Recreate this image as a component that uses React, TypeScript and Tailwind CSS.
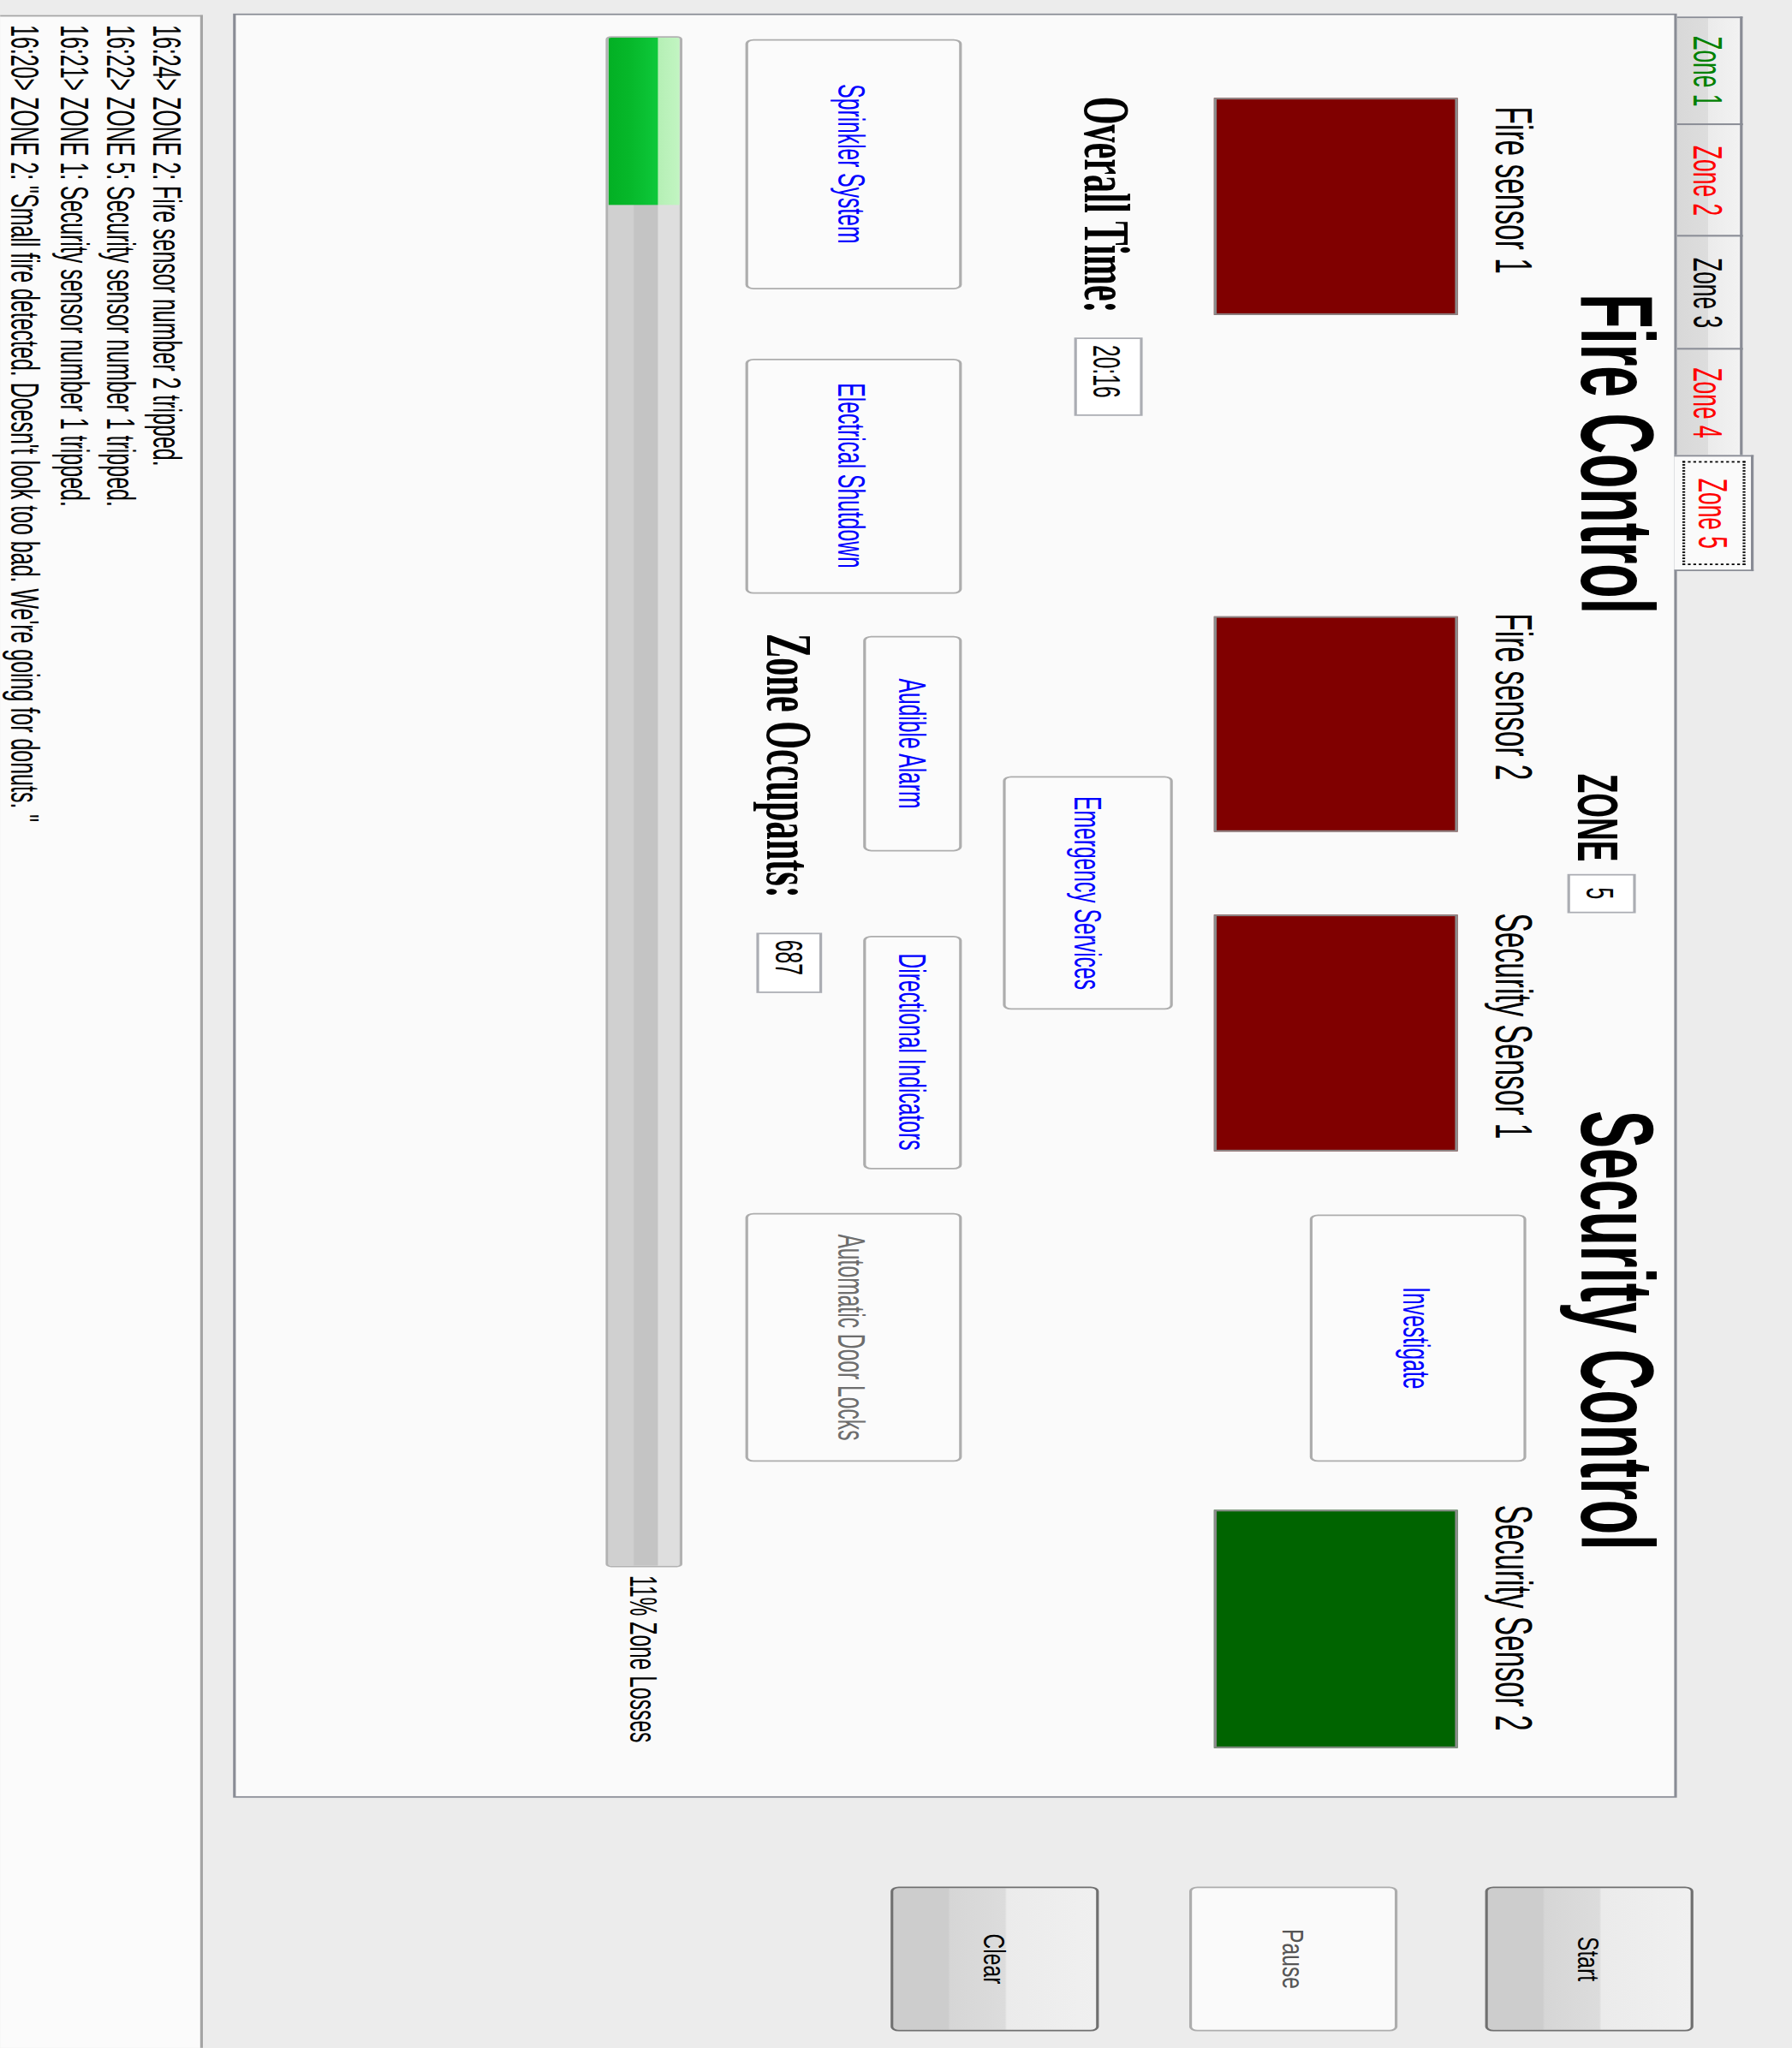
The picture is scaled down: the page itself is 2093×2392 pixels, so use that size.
import React from 'react'

const tabs = [
  { label: 'Zone 1', color: 'text-[#008000]', width: 'w-[72px]' },
  { label: 'Zone 2', color: 'text-[#ff0000]', width: 'w-[75px]' },
  { label: 'Zone 3', color: 'text-black', width: 'w-[76px]' },
  { label: 'Zone 4', color: 'text-[#ff0000]', width: 'w-[72px]' },
]

const logLines = [
  '16:24> ZONE 2: Fire sensor number 2 tripped.',
  '16:22> ZONE 5: Security sensor number 1 tripped.',
  '16:21> ZONE 1: Security sensor number 1 tripped.',
  '16:20> ZONE 2: "Small fire detected. Doesn\'t look too bad. We\'re going for donuts. "',
]

const PanelButton = ({ label, className, muted }: { label: string; className: string; muted?: boolean }) => (
  <div
    className={`flex shrink-0 items-center justify-center rounded-[3px] border border-[#adadad] bg-[#fbfbfb] text-[14px] leading-none whitespace-nowrap ${
      muted ? 'text-[#6d6d6d]' : 'text-[#0000ff]'
    } ${className}`}
  >
    {label}
  </div>
)

const Sensor = ({ label, labelClass, boxClass }: { label: string; labelClass: string; boxClass: string }) => (
  <div className="flex shrink-0 flex-col">
    <span className={`h-[19px] text-[19px] leading-none whitespace-nowrap text-black ${labelClass}`}>{label}</span>
    <div className={`mt-[10.7px] h-[89.65px] border border-[#8a8a8a] ${boxClass}`} />
  </div>
)

const SideButton = ({ label, active }: { label: string; active: boolean }) => (
  <div
    className={`flex h-[76px] w-[95.4px] items-center justify-center rounded-[3px] border text-[14px] leading-none ${
      active
        ? 'border-[#707070] bg-[linear-gradient(to_bottom,#f0f0f0_0%,#ebebeb_44%,#dcdcdc_45%,#d6d6d6_72%,#cdcdcd_73%,#cdcdcd_100%)] text-black'
        : 'border-[#adadad] bg-[#fafafa] text-[#555555]'
    }`}
  >
    <span className="inline-block scale-y-[0.8]">{label}</span>
  </div>
)

const TextBox = ({ value, className }: { value: string; className: string }) => (
  <div className={`flex shrink-0 items-center border border-[#abadb3] bg-white text-[14px] leading-none text-black ${className}`}>
    {value}
  </div>
)

export default function App() {
  return (
    <div className="h-[2392px] w-[2093px] overflow-hidden bg-[#ececec]">
      <div className="flex h-[654px] w-[1359px] origin-top-left flex-col font-['Liberation_Sans',Arial,sans-serif] [transform:translateX(2093px)_rotate(90deg)_scale(1.76,3.2)]">
        <div className="flex items-start">
          {/* Zone tabs */}
          <div className="ml-[8.5px] mt-[14.4px] flex w-[1184.5px] flex-col">
            <div className="flex h-[27.2px] items-end pl-[2.9px]">
              {tabs.map((tab) => (
                <div
                  key={tab.label}
                  className={`-mr-px flex h-[24px] items-center justify-center border border-b-0 border-[#898c95] bg-[linear-gradient(to_bottom,#f2f2f2_0%,#ebebeb_50%,#dddddd_51%,#d8d8d8_100%)] text-[15px] leading-none ${tab.width} ${tab.color}`}
                >
                  {tab.label}
                </div>
              ))}
              <div className="relative z-10 -mb-px h-[28.2px] w-[77px] border border-b-0 border-[#898c95] bg-[#fafafa] px-[3px] pb-[2.6px] pt-[2px]">
                <div className="flex h-full items-center justify-center border border-dotted border-black text-[15px] leading-none text-[#ff0000]">
                  Zone 5
                </div>
              </div>
            </div>

            <div className="flex h-[527.4px] flex-col border border-[#898c95] bg-[#fafafa]">
              {/* titles */}
              <div className="mt-[3.4px] flex items-start pl-[185.4px]">
                <div className="w-[318.6px] shrink-0 text-[37.5px] font-bold leading-none whitespace-nowrap text-black">
                  Fire Control
                </div>
                <div className="mt-[14.1px] w-[66.5px] shrink-0 text-[21px] font-bold leading-none text-black">ZONE</div>
                <TextBox value="5" className="mt-[11.2px] h-[25.3px] w-[25.7px] justify-center" />
                <div className="ml-[131.3px] shrink-0 text-[37.5px] font-bold leading-none whitespace-nowrap text-black">
                  Security Control
                </div>
              </div>

              {/* sensors */}
              <div className="mt-[8.4px] flex items-start pl-[55.3px]">
                <Sensor label="Fire sensor 1" labelClass="ml-[6px]" boxClass="w-[144.2px] bg-[#800000]" />
                <div className="ml-[200px]">
                  <Sensor label="Fire sensor 2" labelClass="-ml-[2px]" boxClass="w-[143px] bg-[#800000]" />
                </div>
                <div className="ml-[55px]">
                  <Sensor label="Security Sensor 1" labelClass="-ml-[1px]" boxClass="w-[157px] bg-[#800000]" />
                </div>
                <PanelButton label="Investigate" className="ml-[42px] mt-[5.3px] h-[78.8px] w-[164px]" />
                <div className="ml-[31.7px]">
                  <Sensor label="Security Sensor 2" labelClass="-ml-[3px]" boxClass="w-[158px] bg-[#006400]" />
                </div>
              </div>

              {/* overall time */}
              <div className="mt-[14.75px] flex items-start pl-[54.5px]">
                <div className="mt-[11.8px] w-[160px] shrink-0 font-['Liberation_Serif','Times_New_Roman',serif] text-[24px] font-bold leading-none whitespace-nowrap text-black">
                  Overall Time:
                </div>
                <TextBox value="20:16" className="mt-[11.5px] h-[24.7px] w-[51.6px] pl-[4px]" />
                <PanelButton label="Emergency Services" className="ml-[239.2px] h-[62.4px] w-[155.7px]" />
              </div>

              {/* actions */}
              <div className="mt-[14.6px] flex items-start pl-[16.5px]">
                <PanelButton label="Sprinkler System" className="h-[79.2px] w-[165.5px]" />
                <PanelButton label="Electrical Shutdown" className="ml-[46px] h-[79.2px] w-[156.25px]" />
                <div className="ml-[26.75px] flex shrink-0 flex-col">
                  <div className="flex">
                    <PanelButton label="Audible Alarm" className="ml-[1.5px] h-[36.4px] w-[143px]" />
                    <PanelButton label="Directional Indicators" className="ml-[55.5px] h-[36.4px] w-[155.1px]" />
                  </div>
                  <div className="mt-[14.35px] flex items-start">
                    <div className="mt-[0.45px] w-[198.25px] shrink-0 font-['Liberation_Serif','Times_New_Roman',serif] text-[24px] font-bold leading-none whitespace-nowrap text-black">
                      Zone Occupants:
                    </div>
                    <TextBox value="687" className="h-[24.65px] w-[39.75px] pl-[4px]" />
                  </div>
                </div>
                <PanelButton label="Automatic Door Locks" muted className="ml-[29.4px] h-[79.2px] w-[165px]" />
              </div>

              {/* losses */}
              <div className="mt-[22.5px] flex items-center pl-[14.4px]">
                <div className="h-[28.4px] w-[1016.4px] shrink-0 overflow-hidden rounded-[2px] border border-[#b2b2b2] bg-[linear-gradient(to_bottom,#dedede_0%,#dedede_30%,#c4c4c4_31%,#c4c4c4_64%,#d0d0d0_65%,#d0d0d0_100%)]">
                  <div className="h-full w-[11%] bg-[linear-gradient(to_bottom,#c2f5c2_0%,#b5efb5_30%,#0ec83a_31%,#06b82a_70%,#03b024_100%)]" />
                </div>
                <div className="ml-[5.2px] text-[14px] leading-none whitespace-nowrap text-black">11% Zone Losses</div>
              </div>
            </div>
          </div>

          {/* run controls */}
          <div className="ml-[59.3px] mt-[35.6px] flex shrink-0 flex-col gap-[32.7px]">
            <SideButton label="Start" active />
            <SideButton label="Pause" active={false} />
            <SideButton label="Clear" active />
          </div>
        </div>

        {/* event log */}
        <div className="ml-[9.5px] mt-[11.3px] flex-1 border-l border-t border-[#a5a5a5] bg-[#fbfbfb] pl-[6px] pt-[3.4px] text-[14.2px] leading-[17.3px] text-black">
          {logLines.map((line) => (
            <div key={line} className="whitespace-pre">
              {line}
            </div>
          ))}
        </div>
      </div>
    </div>
  )
}
